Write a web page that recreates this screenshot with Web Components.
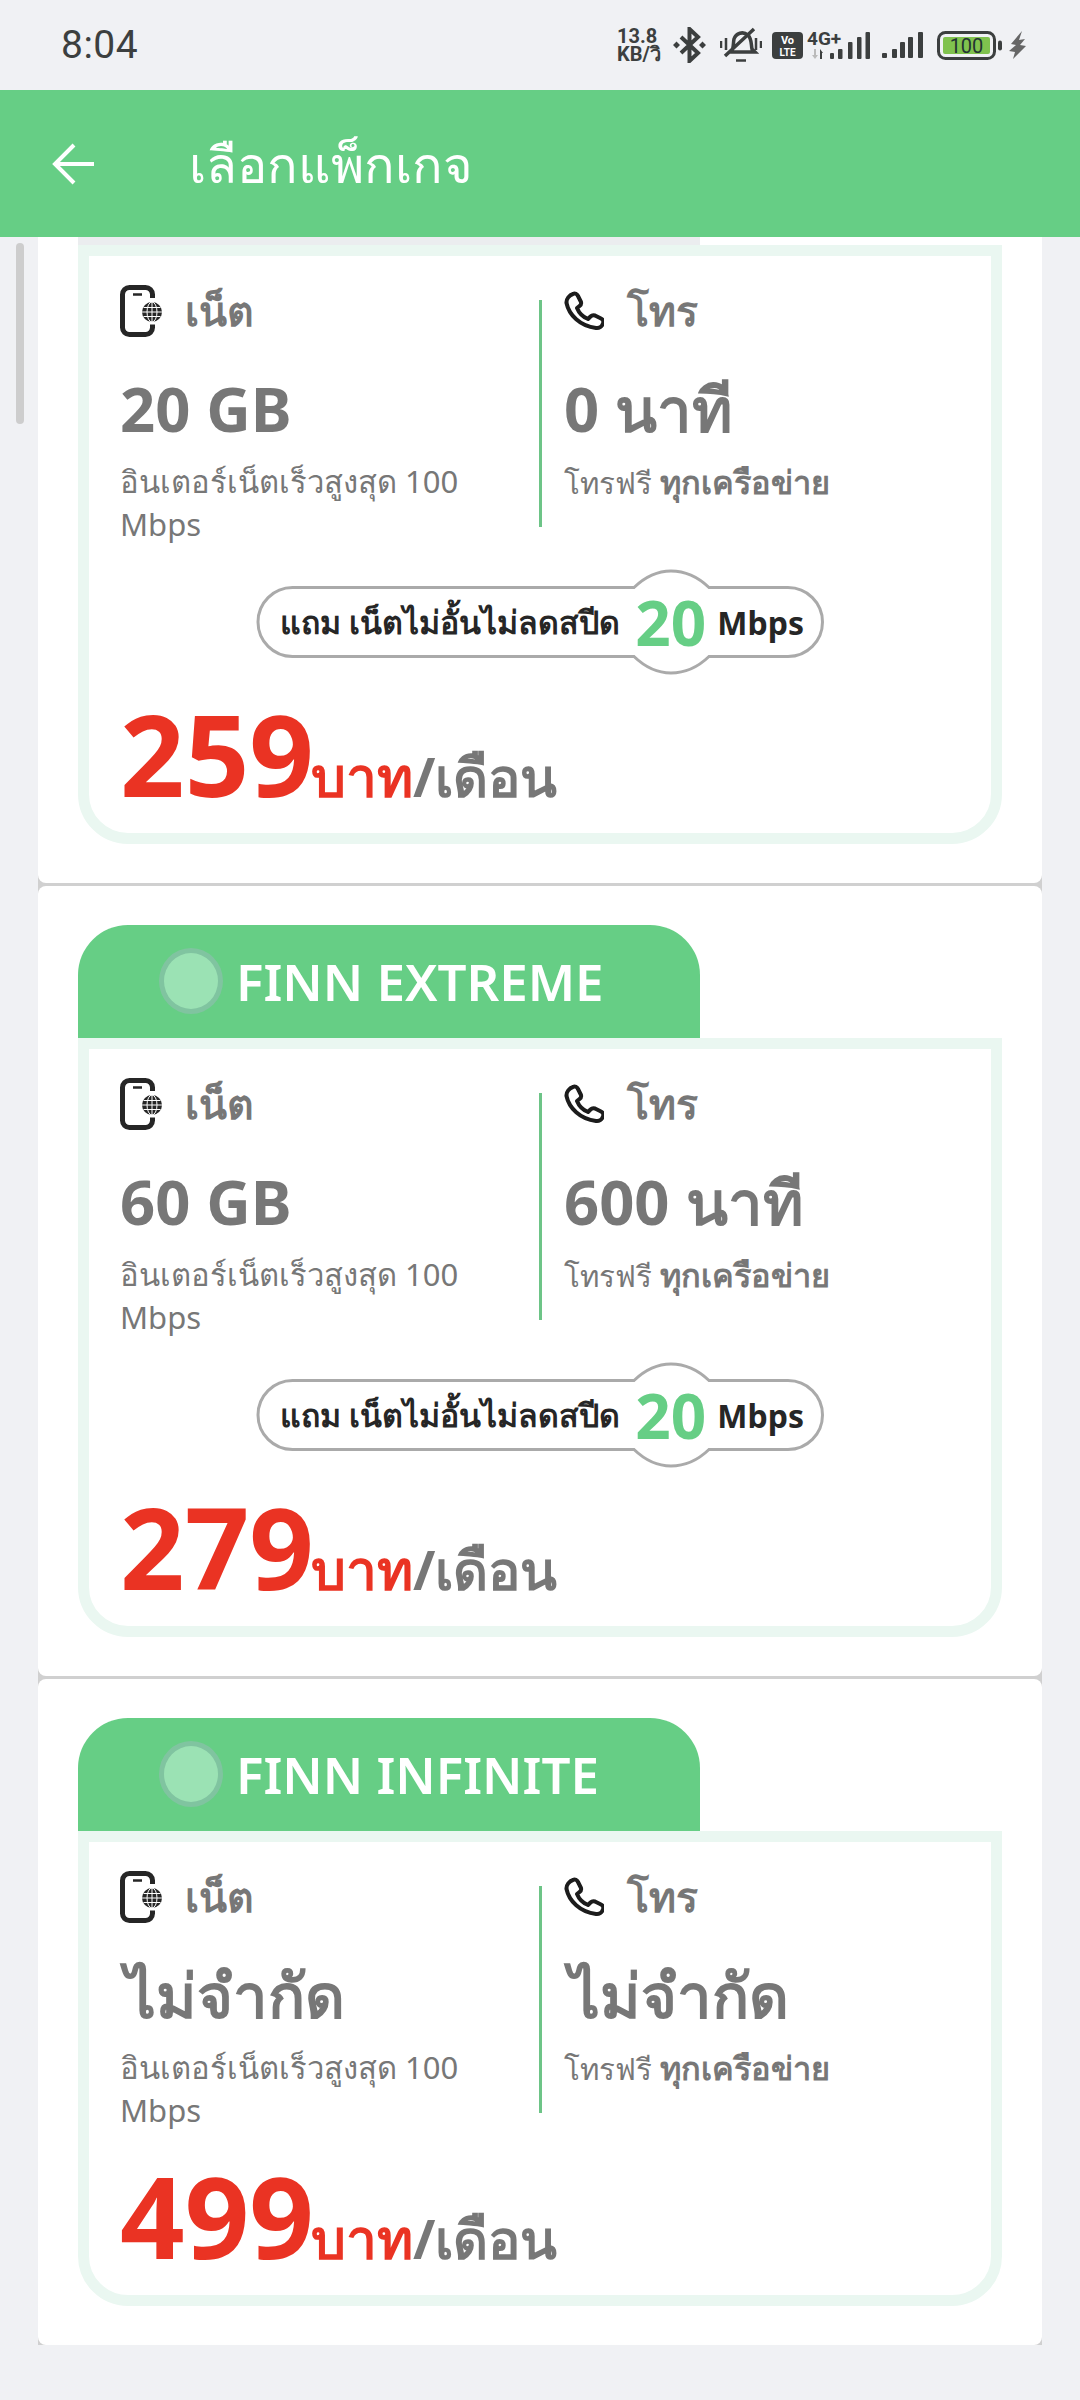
<!DOCTYPE html>
<html lang="th">
<head>
<meta charset="utf-8">
<style>
  html, body { margin: 0; height: 100%; background: #f0f1f4; }
  body { width: 1080px; height: 2400px; overflow: hidden; font-family: "Noto Sans", "Open Sans", sans-serif; display: flex; flex-direction: column; }
</style>
</head>
<body>
<status-bar></status-bar>
<app-bar>เลือกแพ็กเกจ</app-bar>
<plan-list>
  <plan-card clipped>
    <span slot="data">20 GB</span>
    <span slot="call">0 นาที</span>
    <span slot="price">259</span>
    <bonus-pill slot="bonus"></bonus-pill>
  </plan-card>
  <plan-card>
    <span slot="name">FINN EXTREME</span>
    <span slot="data">60 GB</span>
    <span slot="call">600 นาที</span>
    <span slot="price">279</span>
    <bonus-pill slot="bonus"></bonus-pill>
  </plan-card>
  <plan-card>
    <span slot="name">FINN INFINITE</span>
    <span slot="data" style="margin-left:5px">ไม่จำกัด</span>
    <span slot="call" style="margin-left:5px">ไม่จำกัด</span>
    <span slot="price">499</span>
  </plan-card>
</plan-list>
<script>
class StatusBar extends HTMLElement {
  connectedCallback() {
    this.attachShadow({ mode: 'open' });
    this.shadowRoot.innerHTML = `
      <style>
        :host { display: flex; height: 90px; flex: none; align-items: center; justify-content: space-between; padding: 0 54px 0 61px; box-sizing: border-box; color: #3c3f3f; font-family: Roboto, sans-serif; }
        .time { font-size: 39px; letter-spacing: .5px; }
        .icons { display: flex; align-items: center; height: 60px; }
        .speed { width: 45px; font: 700 20px/18px Roboto, "Noto Sans", sans-serif; white-space: nowrap; margin-right: 11px; }
        svg { display: block; flex: none; }
      </style>
      <div class="time">8:04</div>
      <div class="icons">
        <div class="speed">13.8<br>KB/วิ</div>
        <svg width="33" height="36" viewBox="0 0 33 36" fill="none" stroke="#3c3f3f" stroke-width="4"><path d="M8 10l17 16-8.500 8V2L25 10 8 26"/><path d="M0 18l3.500-3.500L7 18l-3.500 3.500zM26 18l3.500-3.500L33 18l-3.500 3.500z" fill="#3c3f3f" stroke="none"/></svg>
        <svg style="margin-left:14px" width="42" height="36" viewBox="0 0 42 36" fill="none" stroke="#3c3f3f" stroke-width="3.500"><path d="M11 25c3-3 2-9 3-13 2-6 9-8 14-4 4 4 3 10 4 14l3 3H11zM5 29L34 2"/><path d="M1 14v7M6 11v12M36 11v12M41 14v7M16 33.500h10" stroke-width="2.500"/></svg>
        <svg style="margin-left:10px" width="31" height="27" viewBox="0 0 31 27"><rect width="31" height="27" rx="4" fill="#3c3f3f"/><text x="15.500" y="12" font-family="Roboto" font-weight="700" font-size="11" fill="#fff" text-anchor="middle">Vo</text><text x="15.500" y="24" font-family="Roboto" font-weight="700" font-size="10" fill="#fff" text-anchor="middle">LTE</text></svg>
        <svg style="margin:0 0 4px 4px" width="63" height="32" viewBox="0 -4 63 32" fill="#3c3f3f"><text x="0" y="14" font-family="Roboto" font-weight="700" font-size="19">4G+</text><path d="M7 18h2v6h2l-3 4-3-4h2z" fill="#bbb"/><path d="M13 18l3 4h-1v6h-2z"/><rect x="23" y="22" width="4" height="6" rx="1"/><rect x="31" y="18" width="4.500" height="10" rx="1"/><rect x="41" y="11" width="4.500" height="17" rx="1"/><rect x="50" y="6" width="4.500" height="22" rx="1"/><rect x="58.500" y="1" width="4.500" height="27" rx="1"/></svg>
        <svg style="margin-left:12px" width="41" height="26" viewBox="0 0 41 26" fill="#3c3f3f"><rect x="0" y="21" width="5" height="5" rx="1"/><rect x="10" y="17" width="5" height="9" rx="1"/><rect x="18" y="10" width="5" height="16" rx="1"/><rect x="26" y="5" width="5" height="21" rx="1"/><rect x="36" y="0" width="5" height="26" rx="1"/></svg>
        <svg style="margin-left:14px" width="65" height="29" viewBox="0 0 65 29"><rect x="1.500" y="1.500" width="56" height="26" rx="7" fill="none" stroke="#3c3f3f" stroke-width="3"/><rect x="6" y="6" width="47" height="17" rx="2" fill="#80c24e"/><text x="29.500" y="21.500" font-family="Roboto" font-size="20" fill="#233" text-anchor="middle">100</text><rect x="61" y="9.500" width="4" height="10" rx="2" fill="#3c3f3f"/></svg>
        <svg style="margin-left:7px" width="17" height="28" viewBox="0 0 17 28" fill="#666"><path d="M13 0L2 13l5 1-7 6 6 1-2 7 13-13-6-1 5-6-6 1z"/></svg>
      </div>`;
  }
}

class AppBar extends HTMLElement {
  connectedCallback() {
    this.attachShadow({ mode: 'open' });
    this.shadowRoot.innerHTML = `
      <style>
        :host { display: flex; flex: none; height: 147px; align-items: center; background: #66ce85; color: #fff; position: relative; z-index: 2; }
        svg { margin-left: 52px; flex: none; }
        .title { margin-left: 95px; font: 400 50.500px/66px "Noto Sans", sans-serif; }
      </style>
      <svg width="42" height="42" viewBox="0 0 42 42" fill="none" stroke="#fff" stroke-width="4"><path d="M42 21H3M22 2L3 21l19 19"/></svg>
      <div class="title"><slot></slot></div>`;
  }
}

class PlanList extends HTMLElement {
  connectedCallback() {
    this.attachShadow({ mode: 'open' });
    this.shadowRoot.innerHTML = `
      <style>
        :host { display: block; flex: 1; overflow: hidden; position: relative; }
        .rows { width: 1004px; margin: -144px 0 0 38px; display: flex; flex-direction: column; gap: 3px; background: #d0d0d0; }
        .thumb { position: absolute; left: 16px; top: 6px; width: 8px; height: 181px; border-radius: 4px; background: #cdcdcd; }
      </style>
      <div class="rows"><slot></slot></div>
      <div class="thumb"></div>`;
  }
}

class PlanCard extends HTMLElement {
  connectedCallback() {
    this.attachShadow({ mode: 'open' });
    this.shadowRoot.innerHTML = `
      <style>
        :host { display: block; padding: 39px 40px; background: #fff; border-radius: 8px; color: #777; }
        .tab { width: 622px; height: 113px; box-sizing: border-box; padding: 0 0 2px 81px; display: flex; align-items: center; gap: 13px; background: #66ce85; border-radius: 50px 50px 0 0; color: #fff; font-size: 51px; font-weight: 600; line-height: 70px; white-space: nowrap; }
        :host([clipped]) .tab { background: #ebedef; }
        :host([clipped]) .dot { display: none; }
        .dot { width: 64px; height: 66px; box-sizing: border-box; border-radius: 50%; background: #9be2b4; border: 5px solid #80c4a0; flex: none; }
        .box { border: 11px solid #eaf7f1; border-radius: 0 0 50px 50px; padding: 29px 32px 26px 31px; }
        .cols { display: flex; }
        .col { flex: none; box-sizing: border-box; }
        .net { width: 419px; }
        .tel { padding-left: 25px; position: relative; }
        .tel::before { content: ""; position: absolute; left: 0; top: 15px; width: 3px; height: 227px; background: #6dc487; }
        .head { display: flex; align-items: center; height: 52px; font-size: 41px; font-weight: 600; gap: 23px; }
        .big { margin-top: 28px; font-size: 61.500px; font-weight: 700; line-height: 86px; white-space: nowrap; }
        .sub { margin-top: 9px; font-size: 31px; line-height: 43px; width: 350px; height: 86px; }
        .sub b { font-weight: 700; }
        .tel .sub { width: auto; font-size: 29.500px; }
        .tel .sub b { font-size: 32.500px; }
        ::slotted(bonus-pill) { margin: 23px 0 -5px 134px; }
        .price { display: flex; align-items: baseline; margin-top: 29px; height: 108px; line-height: 108px; font-weight: 700; font-size: 54px; white-space: nowrap; }
        .num { color: #ea3323; font-size: 113px; }
        .baht { color: #ea3323; margin-left: -3px; font-size: 55px; }
      </style>
      <div class="tab"><span class="dot"></span><slot name="name"></slot></div>
      <div class="box">
        <div class="cols">
          <div class="col net">
            <div class="head">
              <svg width="42" height="52" viewBox="0 0 42 52" fill="none" stroke="#262626" stroke-width="5"><path d="M32.500 13V9.500a7 7 0 0 0-7-7h-16a7 7 0 0 0-7 7v33a7 7 0 0 0 7 7h16a7 7 0 0 0 7-7v-3"/><path d="M13 9.500h9" stroke-width="2.500"/><circle cx="32" cy="27" r="10" fill="#262626" stroke="none"/><g stroke="#fff" stroke-width="1"><path d="M22 27h20M23.500 22.500h17M23.500 31.500h17M32 17v20"/><ellipse cx="32" cy="27" rx="5" ry="10"/></g></svg>
              <span>เน็ต</span>
            </div>
            <div class="big"><slot name="data"></slot></div>
            <div class="sub">อินเตอร์เน็ตเร็วสูงสุด 100 Mbps</div>
          </div>
          <div class="col tel">
            <div class="head">
              <svg width="40" height="40" viewBox="0 0 40 40" fill="none" stroke="#1c1c1c" stroke-width="4" stroke-linejoin="round"><path d="M9 3c2-1 4 0 5 2l3 6c.5 2 0 3-1.500 4L13 17c2 5 6 9 11 11l2.500-2.500c1.500-1.500 3-1.500 4.500-1l6 3c2 1 3 3 2 5-1 3-4 5-7 4.500C16 35 5 24 2.500 12c-.5-4 3-8 6.500-9z"/></svg>
              <span>โทร</span>
            </div>
            <div class="big"><slot name="call"></slot></div>
            <div class="sub">โทรฟรี <b>ทุกเครือข่าย</b></div>
          </div>
        </div>
        <slot name="bonus"></slot>
        <div class="price"><span class="num"><slot name="price"></slot></span><span class="baht">บาท</span><span>/เดือน</span></div>
      </div>`;
  }
}

class BonusPill extends HTMLElement {
  connectedCallback() {
    this.attachShadow({ mode: 'open' });
    this.shadowRoot.innerHTML = `
      <style>
        :host { display: block; width: 572px; height: 106px; position: relative; color: #262626; font-weight: 700; }
        svg { position: absolute; inset: 0; }
        .row { position: relative; display: flex; align-items: center; height: 100%; padding-left: 26px; font-size: 32px; white-space: nowrap; }
        .n { color: #66ce85; font-size: 62px; margin: 0 11px 0 15px; }
      </style>
      <svg width="572" height="106" viewBox="0 0 572 106" fill="none" stroke="#aaa" stroke-width="3"><path d="M38.500 18.500H380C392 7 404 2 417 2s26 5 38 16.500h79a34.500 34.500 0 0 1 0 69H455C443 99 430 104 417 104s-25-5-37-16.500H38.500a34.500 34.500 0 0 1 0-69z"/></svg>
      <div class="row"><span>แถม เน็ตไม่อั้นไม่ลดสปีด</span><span class="n">20</span><span>Mbps</span></div>`;
  }
}

customElements.define('status-bar', StatusBar);
customElements.define('app-bar', AppBar);
customElements.define('plan-list', PlanList);
customElements.define('plan-card', PlanCard);
customElements.define('bonus-pill', BonusPill);
</script>
</body>
</html>
